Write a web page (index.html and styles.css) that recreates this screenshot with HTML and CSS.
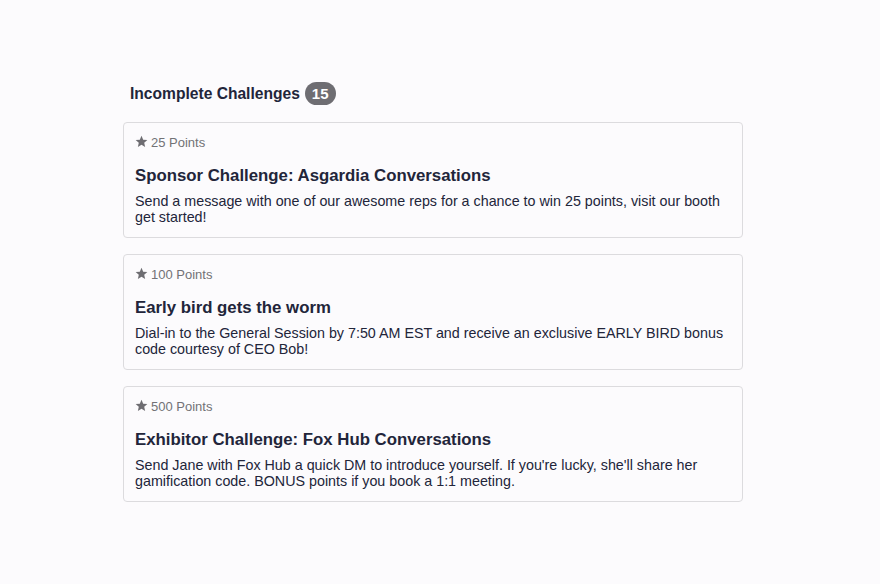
FILE: index.html
```html
<!DOCTYPE html>
<html>
<head>
<meta charset="utf-8">
<link rel="stylesheet" href="styles.css">
</head>
<body>
<main class="wrap">
  <h2 class="heading">Incomplete Challenges <span class="badge">15</span></h2>
  <div class="list">
    <div class="card">
      <div class="points"><svg class="star" viewBox="0 0 24 24"><path d="M12 1.5l3.1 7.1 7.7.7-5.8 5.1 1.7 7.6L12 18l-6.7 4 1.7-7.6-5.8-5.1 7.7-.7z"/></svg>25 Points</div>
      <h3 class="title">Sponsor Challenge: Asgardia Conversations</h3>
      <p class="desc">Send a message with one of our awesome reps for a chance to win 25 points, visit our booth get started!</p>
    </div>
    <div class="card">
      <div class="points"><svg class="star" viewBox="0 0 24 24"><path d="M12 1.5l3.1 7.1 7.7.7-5.8 5.1 1.7 7.6L12 18l-6.7 4 1.7-7.6-5.8-5.1 7.7-.7z"/></svg>100 Points</div>
      <h3 class="title">Early bird gets the worm</h3>
      <p class="desc">Dial-in to the General Session by 7:50 AM EST and receive an exclusive EARLY BIRD bonus code courtesy of CEO Bob!</p>
    </div>
    <div class="card">
      <div class="points"><svg class="star" viewBox="0 0 24 24"><path d="M12 1.5l3.1 7.1 7.7.7-5.8 5.1 1.7 7.6L12 18l-6.7 4 1.7-7.6-5.8-5.1 7.7-.7z"/></svg>500 Points</div>
      <h3 class="title">Exhibitor Challenge: Fox Hub Conversations</h3>
      <p class="desc">Send Jane with Fox Hub a quick DM to introduce yourself. If you're lucky, she'll share her gamification code. BONUS points if you book a 1:1 meeting.</p>
    </div>
  </div>
</main>
</body>
</html>
```

FILE: styles.css
```css
html, body {
  margin: 0;
  padding: 0;
  background: #fcfbfd;
  font-family: "Liberation Sans", Arial, sans-serif;
  color: #22253a;
}
.wrap {
  width: 620px;
  margin: 0 0 0 123px;
  padding-top: 82px;
}
.heading {
  margin: 0 0 17px 7px;
  font-size: 15.6px;
  font-weight: bold;
  display: flex;
  align-items: center;
  gap: 5px;
  height: 23px;
}
.badge {
  display: inline-block;
  background: #6e6d72;
  color: #fff;
  font-size: 15px;
  font-weight: bold;
  border-radius: 12px;
  padding: 0 7px;
  height: 23px;
  line-height: 23px;
}
.list {
  display: flex;
  flex-direction: column;
  gap: 16px;
}
.card {
  border: 1px solid #dcdbde;
  border-radius: 4px;
  padding: 11px 11px 12px 11px;
  background: #fcfbfd;
}
.points {
  display: flex;
  align-items: center;
  gap: 3px;
  font-size: 13px;
  color: #727276;
  height: 16px;
}
.star {
  width: 13px;
  height: 13px;
  fill: #6e6d72;
  margin-top: -2px;
}
.title {
  margin: 16px 0 7px;
  font-size: 16.8px;
  font-weight: bold;
  line-height: 20px;
}
.desc {
  margin: 0;
  font-size: 14.3px;
  line-height: 16px;
}
```
